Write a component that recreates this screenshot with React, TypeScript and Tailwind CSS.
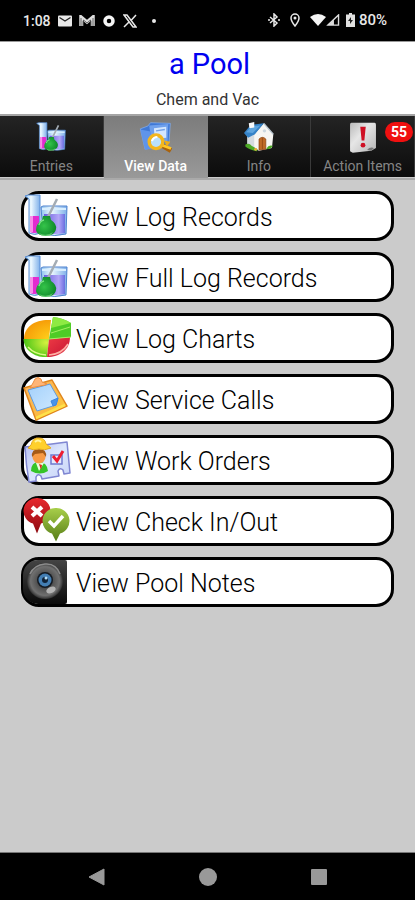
const BeakerIcon = ({ className }: any) => (
  <svg viewBox="0 0 44 44" className={className} aria-hidden="true">
    <defs>
      <linearGradient id="glass" x1="0" x2="1">
        <stop offset="0" stopColor="#8fc3ee" />
        <stop offset="0.4" stopColor="#eef9ff" />
        <stop offset="1" stopColor="#7fb0ea" />
      </linearGradient>
      <linearGradient id="violet" x1="0" x2="1">
        <stop offset="0" stopColor="#6a60e0" />
        <stop offset="0.7" stopColor="#b3a6f7" />
        <stop offset="1" stopColor="#6a6fe0" />
      </linearGradient>
      <radialGradient id="flask" cx="0.4" cy="0.5" r="0.6">
        <stop offset="0" stopColor="#35c44a" />
        <stop offset="1" stopColor="#0f8a2a" />
      </radialGradient>
    </defs>
    <path d="M1 2 4 1h12v38q-5 3-11 0V5z" fill="url(#glass)" stroke="#5b8fd6" />
    <path d="M6 22h9v16q-5 2-9 0z" fill="#e32bd0" />
    <path d="M6 22h3v16H6z" fill="#f78fe8" />
    <path d="M17 13 19 12H43L42 40q-11 3-23 0z" fill="url(#glass)" stroke="#4f83cf" />
    <path d="M20 20h21v19q-10 2-21 0z" fill="url(#violet)" />
    <path d="M18 15h24" stroke="#d9efff" strokeWidth="2" />
    <path d="M24 23 33 5" stroke="#a4adb5" strokeWidth="2.5" />
    <path d="M19 22h7l1 4q6 4 5 9c-1 9-19 9-20 1q0-6 6-10z" fill="url(#flask)" />
    <path d="M15 39q7 4 14-1l-3 4h-8z" fill="#83e58c" opacity="0.6" />
    <path d="M15 31q1-4 5-5" stroke="#7be286" strokeWidth="1.5" fill="none" />
  </svg>
);

const PieIcon = ({ className }: any) => (
  <svg viewBox="0 0 44 44" className={className} aria-hidden="true">
    <defs>
      <radialGradient id="orange" cx="1" cy="1" r="1.2">
        <stop offset="0" stopColor="#ffd21c" />
        <stop offset="1" stopColor="#f59405" />
      </radialGradient>
      <radialGradient id="lime" cx="0.9" cy="0.2" r="0.9">
        <stop offset="0" stopColor="#d5f23e" />
        <stop offset="1" stopColor="#49c416" />
      </radialGradient>
      <linearGradient id="cherry" x1="0" y1="0" x2="1" y2="1">
        <stop offset="0" stopColor="#ee3c45" />
        <stop offset="0.6" stopColor="#d6233a" />
        <stop offset="1" stopColor="#ff8d8d" />
      </linearGradient>
    </defs>
    <path d="M25 23 0 23C0 10 12 3 27 4z" fill="url(#orange)" />
    <path d="M25 23-.5 23C0 35 12 42 23 41z" fill="url(#lime)" />
    <path d="M25 23 23 41C36 41 46 34 46 21z" fill="url(#cherry)" />
    <path d="M25 23 29 1Q39 2 47 7V21z" fill="#4fcb26" />
    <path d="M27 12 29 1Q39 2 47 7z" fill="#8eea43" />
    <path d="M27 17 46 11M25 23 47 21" stroke="#a5ee62" fill="none" />
    <path d="M4 31Q10 38 22 39" stroke="#dcfa87" strokeWidth="1.5" fill="none" />
    <path d="M25 39Q38 38 44 28" stroke="#ffb0a5" strokeWidth="1.5" fill="none" />
  </svg>
);

const ClipboardIcon = ({ className }: any) => (
  <svg viewBox="0 0 44 44" className={className} aria-hidden="true">
    <defs>
      <linearGradient id="board" x1="0" y1="0" x2="1" y2="1">
        <stop offset="0" stopColor="#ffb763" />
        <stop offset="0.6" stopColor="#fbb944" />
        <stop offset="1" stopColor="#ffd83d" />
      </linearGradient>
      <linearGradient id="sheet" x1="0" y1="0" x2="1" y2="1">
        <stop offset="0" stopColor="#a3d0fb" />
        <stop offset="1" stopColor="#cfe9ff" />
      </linearGradient>
    </defs>
    <path d="M0 11 28 3 43 29 12 43z" fill="url(#board)" stroke="#e0851c" strokeWidth="1.5" strokeLinejoin="round" />
    <path d="M12 41 41 28" stroke="#ffe14a" strokeWidth="2.5" />
    <path d="M4 13 26 7 34 21 32 28 13 34z" fill="url(#sheet)" stroke="#5f9be0" strokeLinejoin="round" />
    <path d="M34 21 27 24 29 29 32 28z" fill="#4a93ea" stroke="#3d86e0" strokeLinejoin="round" />
    <path d="M6 11 9 6 11 2q3-3 6 0l1 3 5 2-2 1z" fill="#ffb578" stroke="#ec8f42" />
  </svg>
);

const WorkOrderIcon = ({ className }: any) => (
  <svg viewBox="0 0 44 44" className={className} aria-hidden="true">
    <defs>
      <linearGradient id="badgeCard" x1="0" y1="0" x2="1" y2="1">
        <stop offset="0" stopColor="#b4bdf3" />
        <stop offset="0.5" stopColor="#dce6fc" />
        <stop offset="1" stopColor="#c5d2f8" />
      </linearGradient>
    </defs>
    <path
      d="M1 9Q22 7 43 4L46 35 40 36 39 32Q36 29 34 33L35 38 18 41 17 38Q14 35 12 39L12 43 5 44Q2 27 1 9z"
      fill="url(#badgeCard)"
      stroke="#8087d2"
      strokeWidth="1.5"
      strokeLinejoin="round"
    />
    <path d="M7 33q0-9 8-9 8 0 9 9-8 5-17 0z" fill="#36c428" />
    <path d="M12 25 15 33 20 25z" fill="#e9ffdb" />
    <path d="M15 26 17 32 18 27z" fill="#d9271f" />
    <circle cx="15" cy="19" r="6.5" fill="#f79a45" />
    <path d="M8 19q-1-8 7-8t7 8l-3-4-8 1z" fill="#a55a18" />
    <path d="M4 10 7 7q2-8 8-7 6 0 7 6l5 4q-7 3-12 1-6 2-11-1z" fill="#ffd02c" stroke="#e5ab22" />
    <path d="M11 4q3-3 6 0" stroke="#fff3a0" strokeWidth="2" fill="none" />
    <path d="M27 17H38V26H27z" fill="#e6ebfd" stroke="#6f79cf" strokeWidth="1.5" />
    <path d="M29 18 33 23 39 13" stroke="#ee1c30" strokeWidth="3" fill="none" />
  </svg>
);

const CheckPinsIcon = ({ className }: any) => (
  <svg viewBox="0 0 44 44" className={className} aria-hidden="true">
    <defs>
      <linearGradient id="redPin" x1="0" y1="0" x2="0" y2="1">
        <stop offset="0" stopColor="#e8282e" />
        <stop offset="1" stopColor="#8d0a10" />
      </linearGradient>
      <linearGradient id="greenPin" x1="0" y1="0" x2="0" y2="1">
        <stop offset="0" stopColor="#a8cf4a" />
        <stop offset="1" stopColor="#567c17" />
      </linearGradient>
    </defs>
    <path d="M13-1a13 13 0 0 1 4 25.500l-4 10-4-10A13 13 0 0 1 13-1z" fill="url(#redPin)" />
    <path d="M8 8 18 17M18 8 8 17" stroke="#fff" strokeWidth="4" />
    <path d="M32 9a13 13 0 0 1 4 25.500l-4 8-4-8A13 13 0 0 1 32 9z" fill="url(#greenPin)" />
    <path d="M25 22 30 27 39 17" stroke="#fff" strokeWidth="3.500" fill="none" />
  </svg>
);

const CameraIcon = ({ className }: any) => (
  <svg viewBox="0 0 44 44" className={className} aria-hidden="true">
    <defs>
      <linearGradient id="cameraBody" x1="0" y1="0" x2="0" y2="1">
        <stop offset="0" stopColor="#444" />
        <stop offset="1" stopColor="#0a0a0a" />
      </linearGradient>
      <radialGradient id="lens" cx="0.5" cy="0.5" r="0.5">
        <stop offset="0" stopColor="#222" />
        <stop offset="0.5" stopColor="#565656" />
        <stop offset="0.8" stopColor="#707070" />
        <stop offset="1" stopColor="#303030" />
      </radialGradient>
    </defs>
    <path d="M14 0H41q2 0 2 2V42q0 2-2 2H14A15 15 0 0 1-1 29V15A15 15 0 0 1 14 0z" fill="url(#cameraBody)" />
    <circle cx="21" cy="21" r="18" fill="url(#lens)" />
    <path d="M6 14Q10 5 21 4t15 10" stroke="#8c8c8c" strokeWidth="1.500" fill="none" />
    <circle cx="21" cy="20" r="8" fill="#141a22" />
    <circle cx="21" cy="20" r="6.500" fill="#437eb3" />
    <circle cx="21" cy="20" r="3" fill="#102236" />
    <circle cx="22" cy="18" r="1.500" fill="#b5def8" />
    <ellipse cx="27" cy="30" rx="5" ry="3" transform="rotate(-25 27 30)" fill="#b3b3b3" />
  </svg>
);

const ViewDataIcon = ({ className }: any) => (
  <svg viewBox="0 0 44 44" className={className} aria-hidden="true">
    <path d="M-1 10 10 6 14 1 43 2 41 31 6 40z" fill="#3f78d6" stroke="#86b2f3" />
    <path d="M12 5 40 3 39 28 16 31z" fill="#6fa0ec" />
    <path d="M19 9 37 7V23L20 25z" fill="#d3e6ff" />
    <path d="M22 13 35 11" stroke="#73a2e8" strokeWidth="2" />
    <path d="M-1 11 14 14 18 38 6 41z" fill="#5f94ea" />
    <path d="M32 35 44 42" stroke="#a9620c" strokeWidth="7" />
    <path d="M31 34 44 39" stroke="#ffc727" strokeWidth="4" />
    <path d="M34 27 43 29 38 36z" fill="#f0ae14" />
    <circle cx="22" cy="29" r="10" fill="#b9e0fb" stroke="#f3b61e" strokeWidth="5" />
    <path d="M16 28Q18 22 24 22" stroke="#fff" strokeWidth="3" fill="none" />
  </svg>
);

const HouseIcon = ({ className }: any) => (
  <svg viewBox="0 0 44 44" className={className} aria-hidden="true">
    <path d="M15 18 29 2 43 18 41 38 22 42 5 35V20z" fill="#f7f6f3" />
    <path d="M5 20 15 19V39L5 35z" fill="#d5dbe0" />
    <path d="M29 2 43 18" stroke="#b9c5cf" strokeWidth="2" />
    <path d="M0 16 10 4 29 2 16 18 6 23z" fill="#3583c8" />
    <path d="M3 15 12 6 24 5 13 16z" fill="#5fa5de" />
    <path d="M7 2 15 0V8L8 9z" fill="#fafafa" />
    <path d="M22 25q5-5 10 0v15l-10 1z" fill="#bf6a26" stroke="#8a4212" />
    <path d="M27 23V40" stroke="#8a4212" />
    <circle cx="30" cy="13" r="2.500" fill="#cdd8e0" />
    <path d="M2 33q6-3 9 2l9 5-1 3Q8 41 2 36zM33 39q3-6 9-4-1 5-9 5z" fill="#4da926" />
    <circle cx="17" cy="40" r="2" fill="#f0a83b" />
  </svg>
);

const AlertIcon = ({ className }: any) => (
  <svg viewBox="0 0 44 44" className={className} aria-hidden="true">
    <defs>
      <linearGradient id="paper" x1="0" y1="0" x2="1" y2="1">
        <stop offset="0" stopColor="#b9b9b9" />
        <stop offset="0.4" stopColor="#e6e6e6" />
        <stop offset="1" stopColor="#b5b5b5" />
      </linearGradient>
    </defs>
    <path d="M5 1H39q2 0 2 3V38L34 42 7 45 3 43V4q0-3 2-3z" fill="url(#paper)" />
    <path d="M18 7h8l-2 20h-4z" fill="#cf1024" />
    <circle cx="22" cy="34" r="3.500" fill="#cf1024" />
    <path d="M28 41Q32 36 38 38L34 42z" fill="#777" />
  </svg>
);

const TABS = [
  { label: "Entries", Icon: BeakerIcon },
  { label: "View Data", Icon: ViewDataIcon, active: true },
  { label: "Info", Icon: HouseIcon },
  { label: "Action Items", Icon: AlertIcon, badge: 55 },
];

const ACTIONS = [
  { label: "View Log Records", Icon: BeakerIcon },
  { label: "View Full Log Records", Icon: BeakerIcon },
  { label: "View Log Charts", Icon: PieIcon },
  { label: "View Service Calls", Icon: ClipboardIcon },
  { label: "View Work Orders", Icon: WorkOrderIcon },
  { label: "View Check In/Out", Icon: CheckPinsIcon },
  { label: "View Pool Notes", Icon: CameraIcon },
];

const StatusBar = () => {
  return (
    <div className="flex h-[41px] items-center justify-between bg-black pr-7 pl-[23px] text-sm font-medium text-[#e8e8e8]">
      <div className="flex items-center gap-[7px]">
        <span>1:08</span>
        <svg viewBox="0 0 14 12" className="h-3 w-3.5">
          <rect y="0.500" width="14" height="11" rx="1" fill="#e8e8e8" />
          <path d="M1.500 2.500 7 6l5.500-3.500" stroke="#222" strokeWidth="1.300" fill="none" />
        </svg>
        <svg viewBox="0 0 16 12" className="h-3 w-4">
          <path d="M2 11V2l6 5 6-5v9" stroke="#ddd" strokeWidth="3.500" fill="none" />
          <path d="M4.500 11V5L8 8l3.500-3v6M2 3v8M14 3v8" stroke="#444" strokeWidth="0.800" fill="none" />
        </svg>
        <svg viewBox="0 0 12 12" className="mx-px h-3 w-3">
          <circle cx="6" cy="6" r="4" stroke="#f5f5f5" strokeWidth="3.500" fill="none" />
        </svg>
        <svg viewBox="0 0 14 14" className="h-3.5 w-3.5">
          <path d="M1 1h3l9 12h-3z" stroke="#e8e8e8" strokeWidth="1.500" fill="none" />
          <path d="M13 1 8 6.500M6 8 1 13" stroke="#e8e8e8" strokeWidth="1.500" />
        </svg>
        <span className="ml-2 h-1 w-1 rounded-full bg-[#e8e8e8]" />
      </div>
      <div className="flex items-center">
        <svg viewBox="0 0 12 14" className="mr-2.5 h-3.5 w-3">
          <path d="M2 4 9 10 6 13V1l3 3-7 6" stroke="#e8e8e8" strokeWidth="1.500" fill="none" />
          <path d="M0 7h2M10 7h2" stroke="#e8e8e8" strokeWidth="1.500" />
        </svg>
        <svg viewBox="0 0 10 14" className="mr-2.5 h-3.5 w-2.5">
          <path d="M5 1a4 4 0 0 1 4 4c0 3-4 8-4 8S1 8 1 5a4 4 0 0 1 4-4z" stroke="#e8e8e8" strokeWidth="1.500" fill="none" />
          <circle cx="5" cy="5" r="1.500" fill="#e8e8e8" />
        </svg>
        <svg viewBox="0 0 16 12" className="h-3 w-4">
          <path d="M0 3q8-6 16 0L8 12z" fill="#f5f5f5" />
        </svg>
        <svg viewBox="0 0 14 13" className="mr-1.5 h-3 w-3.5">
          <path d="M1.500 12 13 1v11z" stroke="#ddd" strokeWidth="1.500" fill="none" />
          <path d="M2 12 8 6v6z" fill="#ddd" />
        </svg>
        <svg viewBox="0 0 9 14" className="mr-1 h-3.5 w-[9px]">
          <path d="M3 0h3v1.500h3V14H0V1.500h3z" fill="#e0e0e0" />
          <path d="M5 4 2 8h2v3l3-4H5z" fill="#222" />
        </svg>
        <span className="text-[15px]">80%</span>
      </div>
    </div>
  );
};

const Tab = ({ tab }: any) => {
  const { label, Icon, active, badge } = tab;
  return (
    <button
      type="button"
      role="tab"
      aria-selected={!!active}
      className={
        active
          ? "relative flex h-full flex-col items-center bg-linear-to-b from-[#7c7c7c] to-[#999] pt-1.5 text-sm font-medium text-white"
          : "relative flex h-[61px] flex-col items-center border-r border-[#3a3a3a] bg-linear-to-b from-[#242424] to-[#0c0c0c] pt-1.5 text-sm text-[#858585]"
      }
    >
      <Icon className="h-[30px] w-[30px] overflow-visible" />
      <span className="mt-1 leading-5 whitespace-nowrap">{label}</span>
      {badge && (
        <span className="absolute top-1.5 right-px flex h-5 w-7 items-center justify-center rounded-full bg-[#f01010] text-sm font-bold text-white">
          {badge}
        </span>
      )}
    </button>
  );
};

const ActionButton = ({ action }: any) => {
  const { label, Icon } = action;
  return (
    <button
      type="button"
      className="flex h-[50px] w-full items-center gap-2 rounded-[18px] border-3 border-black bg-white text-left text-[25px] font-light text-black"
    >
      <Icon className="h-11 w-11 shrink-0 overflow-visible" />
      <span className="pt-[3px]">{label}</span>
    </button>
  );
};

const App = () => {
  return (
    <div className="flex min-h-screen flex-col bg-[#cbcbcb] font-[Roboto,sans-serif]">
      <StatusBar />
      <header className="flex h-[75px] flex-col items-center border-t border-b-2 border-t-[#999] border-b-[#a5a5a5] bg-white pt-1">
        <h1 className="pl-1 text-[29px] leading-9 text-[#0000f0]">a Pool</h1>
        <p className="mt-2 text-base leading-5 text-[#333]">Chem and Vac</p>
      </header>
      <div role="tablist" className="grid h-16 grid-cols-4 border-b-2 border-[#aaa]">
        {TABS.map((tab) => (
          <Tab key={tab.label} tab={tab} />
        ))}
      </div>
      <main className="flex flex-1 flex-col gap-[11px] px-[21px] pt-[11px] pb-4">
        {ACTIONS.map((action) => (
          <ActionButton key={action.label} action={action} />
        ))}
      </main>
      <nav className="flex h-12 items-center justify-center gap-[93px] border-t border-[#777] bg-black">
        <button type="button" aria-label="Back">
          <svg viewBox="0 0 18 18" className="h-[18px] w-[18px]">
            <path d="M1 9 16 1v16z" fill="#999" stroke="#999" strokeLinejoin="round" />
          </svg>
        </button>
        <button type="button" aria-label="Home">
          <svg viewBox="0 0 18 18" className="h-[18px] w-[18px]">
            <circle cx="9" cy="9" r="9" fill="#999" />
          </svg>
        </button>
        <button type="button" aria-label="Recent apps">
          <svg viewBox="0 0 18 18" className="h-[18px] w-[18px]">
            <rect x="1" y="1" width="16" height="16" rx="1" fill="#999" />
          </svg>
        </button>
      </nav>
    </div>
  );
};

export default App;
